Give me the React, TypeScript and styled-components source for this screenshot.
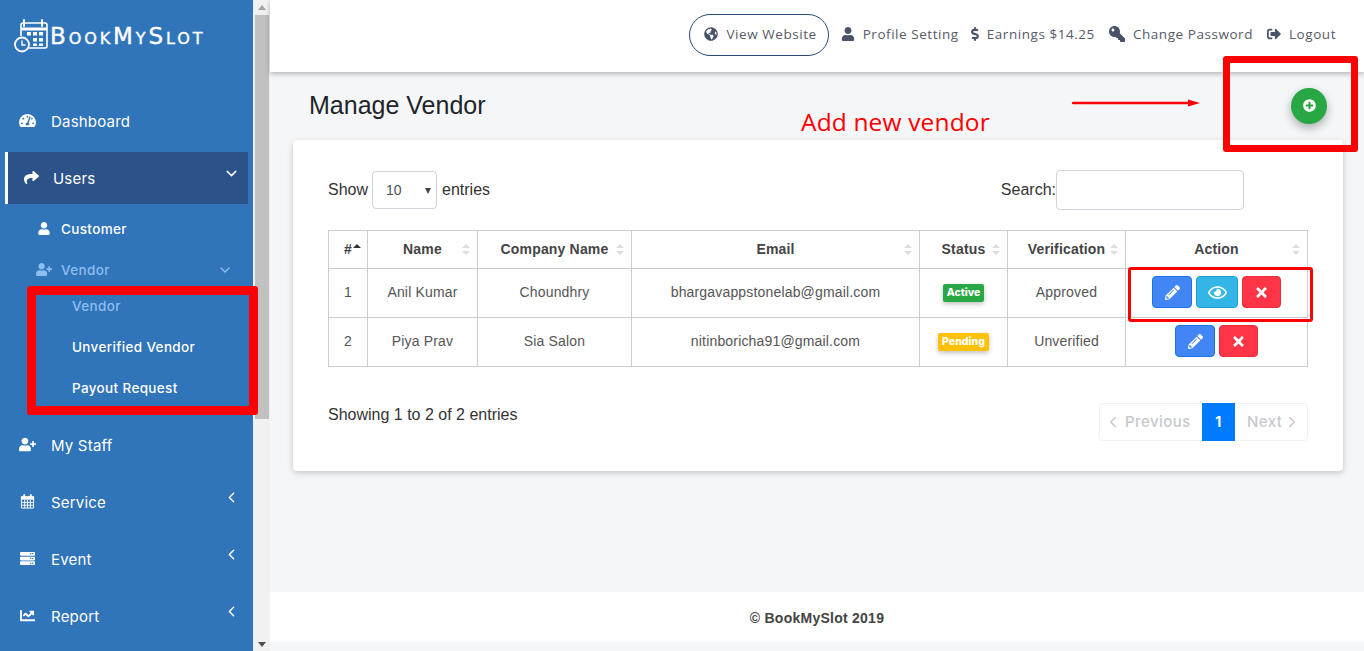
import React from 'react';
import styled, { createGlobalStyle } from 'styled-components';
import {
	FaChartLine,
	FaDollarSign,
	FaGlobeAmericas,
	FaKey,
	FaPencilAlt,
	FaPlusCircle,
	FaRegEye,
	FaServer,
	FaShare,
	FaSignOutAlt,
	FaTachometerAlt,
	FaTimes,
	FaUser,
	FaUserPlus,
} from 'react-icons/fa';
import { FiChevronDown, FiChevronLeft, FiChevronRight } from 'react-icons/fi';

const GlobalStyle = createGlobalStyle`
	html, body {
		margin: 0;
		height: 100%;
		overflow: hidden;
	}
	* {
		box-sizing: border-box;
	}
`;

const Page = styled.div`
	position: relative;
	display: flex;
	width: 100%;
	height: 651px;
	overflow: hidden;
	background: #f5f6f8;
	font-family: 'Liberation Sans', Arial, sans-serif;
`;

const Sidebar = styled.aside`
	width: 253px;
	flex-shrink: 0;
	background: #3074b9;
	color: #fff;
	font-family: Inter, 'Open Sans', sans-serif;
	overflow: hidden;
`;

const Logo = styled.div`
	display: flex;
	align-items: center;
	height: 92px;
	padding: 0 0 20px 13px;
	gap: 1px;
`;

const LogoText = styled.span`
	font-family: 'DejaVu Sans', sans-serif;
	font-variant: small-caps;
	font-size: 23px;
	line-height: 1;
	letter-spacing: 2.9px;
	-webkit-text-stroke: 0.4px #fff;
	white-space: nowrap;
`;

const NavRow = styled.div`
	display: flex;
	align-items: center;
	height: 57px;
	padding: 0 13px 0 19px;
	font-size: 15px;
	font-weight: 400;
	letter-spacing: 0.2px;

	svg.lead {
		width: 17px;
		height: 15px;
		margin-right: 15px;
	}
`;

const NavLabel = styled.span`
	flex: 1;
`;

const MainLabel = styled(NavLabel)`
	margin-top: 2px;
`;

const Caret = styled.span`
	display: flex;
	margin-top: -8px;
	font-size: 17px;
`;

const ActiveRow = styled.div`
	display: flex;
	align-items: center;
	height: 52px;
	margin: 2.5px 5px 4.5px 5px;
	padding: 0 8px 0 15px;
	background: #2b5389;
	border-left: 3px solid #fff;
	font-size: 15px;
	font-weight: 400;
	letter-spacing: 0.2px;

	svg.lead {
		width: 17px;
		height: 15px;
		margin-right: 13px;
	}
`;

const SubRow = styled.div<{ $muted?: boolean }>`
	display: flex;
	align-items: center;
	height: 41px;
	padding: 0 20px 0 36px;
	font-size: 13.5px;
	font-weight: 500;
	letter-spacing: 0.35px;
	color: ${(p) => (p.$muted ? '#8fbdf0' : '#fff')};

	svg.lead {
		width: 16px;
		height: 13px;
		margin-right: 9px;
	}
`;

const SubSubRow = styled.div<{ $muted?: boolean }>`
	display: flex;
	align-items: center;
	height: 41px;
	padding-left: 72px;
	font-size: 13.5px;
	font-weight: 500;
	letter-spacing: 0.35px;
	color: ${(p) => (p.$muted ? '#8fbdf0' : '#fff')};
`;

const SubSubGroup = styled.div`
	margin-top: -5px;
	margin-bottom: 8px;
`;

const ScrollTrack = styled.div`
	display: flex;
	flex-direction: column;
	align-items: center;
	width: 17px;
	flex-shrink: 0;
	background: #f1f1f1;
`;

const ScrollArrow = styled.div<{ $down?: boolean }>`
	width: 0;
	height: 0;
	margin: ${(p) => (p.$down ? 'auto 0 4px' : '5px 0 4px')};
	border-left: 4px solid transparent;
	border-right: 4px solid transparent;
	border-bottom: ${(p) => (p.$down ? '0' : '5px solid #a3a3a3')};
	border-top: ${(p) => (p.$down ? '5px solid #505050' : '0')};
`;

const ScrollThumb = styled.div`
	width: 14px;
	height: 404px;
	margin-top: 1px;
	background: #c1c1c1;
`;

const Main = styled.main`
	flex: 1;
	display: flex;
	flex-direction: column;
	min-width: 0;
`;

const TopBar = styled.header`
	display: flex;
	align-items: center;
	justify-content: flex-end;
	height: 72px;
	flex-shrink: 0;
	padding: 0 28px 2px 0;
	background: #fff;
	box-shadow: 0 2px 5px rgba(0, 0, 0, 0.26);
	font-family: 'Open Sans', sans-serif;
	font-size: 13.5px;
	letter-spacing: 0.55px;
	color: #555b68;
	position: relative;
`;

const TopLink = styled.a<{ $gap?: number; $left?: number }>`
	display: flex;
	align-items: center;
	gap: ${(p) => p.$gap ?? 8}px;
	margin-left: ${(p) => p.$left ?? 14}px;
	padding-bottom: 2px;
	white-space: nowrap;

	svg {
		color: #49526a;
		font-size: 14px;
	}
`;

const ViewSite = styled(TopLink)`
	height: 42px;
	margin: 0 -2px 0 0;
	padding: 0 11px 2px 14px;
	border: 1px solid #2b4a78;
	border-radius: 21px;
`;

const KeyIcon = styled(FaKey)`
	transform: scaleX(-1);
	&& {
		font-size: 16px;
	}
`;

const Content = styled.div`
	flex: 1;
	padding: 0 21px 0 23px;
`;

const TitleRow = styled.div`
	display: flex;
	align-items: center;
	justify-content: space-between;
	height: 68px;
	padding: 0 16px 0 16px;
`;

const Title = styled.h1`
	margin: 0 0 2px;
	font-size: 25px;
	font-weight: 400;
	color: #212529;
`;

const Fab = styled.button`
	display: flex;
	align-items: center;
	justify-content: center;
	width: 36px;
	height: 36px;
	margin-top: -1px;
	border: 0;
	border-radius: 50%;
	background: #28a745;
	color: #fff;
	font-size: 13px;
	box-shadow: 0 4px 10px rgba(0, 0, 0, 0.3);
`;

const Card = styled.section`
	height: 331px;
	padding: 30px 35px 0;
	background: #fff;
	border-radius: 4px;
	box-shadow: 0 2px 6px rgba(0, 0, 0, 0.2);
`;

const Controls = styled.div`
	display: flex;
	align-items: center;
	justify-content: space-between;
	height: 40px;
	padding-right: 64px;
	font-size: 16px;
	color: #333;
`;

const Group = styled.label`
	display: flex;
	align-items: center;
	margin-top: -1px;
`;

const SelectBox = styled.div`
	position: relative;
	display: flex;
	align-items: center;
	width: 65px;
	height: 38px;
	margin: 0 5px 0 4px;
	padding-left: 13px;
	border: 1px solid #ced4da;
	border-radius: 4px;
	font-size: 14px;
	color: #495057;

	&::after {
		content: '';
		position: absolute;
		right: 5px;
		top: 16px;
		border-left: 3.5px solid transparent;
		border-right: 3.5px solid transparent;
		border-top: 6px solid #444;
	}
`;

const SearchInput = styled.input`
	width: 188px;
	height: 40px;
	margin-top: 1px;
	padding: 0 10px;
	border: 1px solid #ced4da;
	border-radius: 4px;
	background: #fff;
	outline: none;
`;

const Table = styled.table`
	width: 979px;
	margin-top: 20px;
	border-collapse: collapse;
	table-layout: fixed;
	font-size: 14px;
	letter-spacing: 0.17px;
	color: #555;
`;

const Th = styled.th`
	position: relative;
	height: 38px;
	padding: 0 8px 2px;
	border: 1px solid #ccc;
	font-weight: 700;
	color: #444;
	text-align: center;
	white-space: nowrap;
`;

const Td = styled.td`
	height: 49px;
	padding: 0 4px 2px;
	border: 1px solid #ccc;
	text-align: center;
	white-space: nowrap;
`;

const Sort = styled.span<{ $asc?: boolean }>`
	position: absolute;
	right: ${(p) => (p.$asc ? '6px' : '7px')};
	top: 13px;
	width: 8px;
	height: 11px;

	&::before,
	&::after {
		content: '';
		position: absolute;
		left: 0;
		border-left: 4px solid transparent;
		border-right: 4px solid transparent;
	}
	&::before {
		top: 0;
		border-bottom: 4px solid ${(p) => (p.$asc ? '#333' : '#ddd')};
	}
	&::after {
		bottom: 0;
		border-top: 4px solid ${(p) => (p.$asc ? 'transparent' : '#ddd')};
	}
`;

const Badge = styled.span<{ $tone: string }>`
	display: inline-block;
	margin-top: 2px;
	padding: 2px 4px;
	border-radius: 2px;
	background: ${(p) => p.$tone};
	color: #fff;
	font-family: Inter, sans-serif;
	font-size: 10.5px;
	font-weight: 800;
	letter-spacing: 0;
	line-height: 14px;
	box-shadow: 0 2px 5px rgba(0, 0, 0, 0.25);
`;

const Actions = styled.div`
	display: flex;
	justify-content: center;
	gap: 4px;
`;

const ActionButton = styled.button<{ $tone: string; $edge: string; $w: number; $icon?: number }>`
	display: flex;
	align-items: center;
	justify-content: center;
	width: ${(p) => p.$w}px;
	height: 32px;
	padding: 0;
	border: 1px solid ${(p) => p.$edge};
	border-radius: 4px;
	background: ${(p) => p.$tone};
	color: #fff;
	font-size: ${(p) => p.$icon ?? 15}px;
`;

const TableFoot = styled.div`
	display: flex;
	justify-content: space-between;
	margin-top: 36px;
	font-size: 16px;
	color: #333;
	line-height: 22px;

	> span {
		margin-top: 1px;
	}
`;

const Pager = styled.div`
	display: flex;
	height: 38px;
	border: 1px solid #f0f1f2;
	border-radius: 4px;
	font-family: Inter, sans-serif;
	font-size: 15px;
	font-weight: 500;
	letter-spacing: 0.45px;
	color: #c6c9cd;

	svg {
		font-size: 18px;
	}
`;

const PagerStep = styled.span<{ $w: number; $pad: number; $gap: number }>`
	display: flex;
	align-items: center;
	gap: ${(p) => p.$gap}px;
	width: ${(p) => p.$w}px;
	padding-left: ${(p) => p.$pad}px;
`;

const PagerCurrent = styled.span`
	display: flex;
	align-items: center;
	justify-content: center;
	width: 33px;
	margin: -1px 0;
	background: #007bff;
	color: #fff;
	font-size: 14px;
	font-weight: 700;
`;

const Footer = styled.footer`
	display: flex;
	align-items: center;
	justify-content: center;
	height: 50px;
	flex-shrink: 0;
	margin-bottom: 9px;
	padding-top: 2px;
	background: #fff;
	font-size: 14px;
	font-weight: 700;
	letter-spacing: 0.25px;
	color: #444;
`;

const RedBox = styled.div<{ $x: number; $y: number; $w: number; $h: number; $b: number }>`
	position: absolute;
	left: ${(p) => p.$x}px;
	top: ${(p) => p.$y}px;
	width: ${(p) => p.$w}px;
	height: ${(p) => p.$h}px;
	border: ${(p) => p.$b}px solid #fe0000;
	border-radius: 3px;
	pointer-events: none;
`;

const Note = styled.div`
	position: absolute;
	left: 801px;
	top: 105px;
	font-family: 'Open Sans', sans-serif;
	font-size: 24.5px;
	letter-spacing: 0.15px;
	line-height: 34px;
	color: #fe0000;
	white-space: nowrap;
`;

const Arrow = styled.svg`
	position: absolute;
	left: 1072px;
	top: 98px;
`;

const LogoMark = () => (
	<svg width="36" height="36" viewBox="0 0 36 36" fill="none" stroke="#fff" strokeWidth="1.6">
		<path d="M8 18V7a2 2 0 0 1 2-2h22a2 2 0 0 1 2 2v21a2 2 0 0 1-2 2H16" />
		<path d="M8 11h26" strokeWidth="3" />
		<path d="M11 2v6M29 2v6" strokeWidth="2" strokeLinecap="round" />
		<g fill="#fff" stroke="none">
			<rect x="14" y="14" width="4" height="3.5" />
			<rect x="20" y="14" width="4" height="3.5" />
			<rect x="26" y="14" width="4" height="3.5" />
			<rect x="20" y="20" width="4" height="3.5" />
			<rect x="26" y="20" width="4" height="3.5" />
			<rect x="20" y="25.5" width="4" height="2.5" />
			<rect x="26" y="25.5" width="4" height="2.5" />
		</g>
		<circle cx="9" cy="26.5" r="7" strokeWidth="1.8" fill="#3074b9" />
		<path d="M9 22.5v4.5h3.5" strokeWidth="1.4" />
	</svg>
);

const CalendarGrid = () => (
	<svg className="lead" viewBox="0 0 16 16" fill="none" stroke="#fff">
		<path d="M1.5 3h13v12h-13z" strokeWidth="1" />
		<path d="M1 2.5h14V6H1z" fill="#fff" strokeWidth="0" />
		<path d="M4.5 1v3M11.5 1v3" strokeWidth="2" strokeLinecap="round" />
		<path d="M5 6v9M8 6v9M11 6v9M1.5 9h13M1.5 12h13" strokeWidth="1" />
	</svg>
);

const columns = [
	{ name: '#', width: 39 },
	{ name: 'Name', width: 110 },
	{ name: 'Company Name', width: 154 },
	{ name: 'Email', width: 288 },
	{ name: 'Status', width: 88 },
	{ name: 'Verification', width: 118 },
	{ name: 'Action', width: 182 },
];

const vendors = [
	{ id: 1, name: 'Anil Kumar', company: 'Choundhry', email: 'bhargavappstonelab@gmail.com', status: 'Active', tone: '#28a745', verification: 'Approved', view: true },
	{ id: 2, name: 'Piya Prav', company: 'Sia Salon', email: 'nitinboricha91@gmail.com', status: 'Pending', tone: '#ffc107', verification: 'Unverified', view: false },
];

const App = () => {
	return (
		<Page>
			<GlobalStyle />
			<Sidebar>
				<Logo>
					<LogoMark />
					<LogoText>BookMySlot</LogoText>
				</Logo>
				<NavRow>
					<FaTachometerAlt className="lead" />
					<MainLabel>Dashboard</MainLabel>
				</NavRow>
				<ActiveRow>
					<FaShare className="lead" />
					<MainLabel>Users</MainLabel>
					<Caret>
						<FiChevronDown />
					</Caret>
				</ActiveRow>
				<SubRow>
					<FaUser className="lead" />
					<NavLabel>Customer</NavLabel>
				</SubRow>
				<SubRow $muted>
					<FaUserPlus className="lead" />
					<NavLabel>Vendor</NavLabel>
					<FiChevronDown size={16} />
				</SubRow>
				<SubSubGroup>
					<SubSubRow $muted>Vendor</SubSubRow>
					<SubSubRow>Unverified Vendor</SubSubRow>
					<SubSubRow>Payout Request</SubSubRow>
				</SubSubGroup>
				<NavRow>
					<FaUserPlus className="lead" />
					<MainLabel>My Staff</MainLabel>
				</NavRow>
				<NavRow>
					<CalendarGrid />
					<MainLabel>Service</MainLabel>
					<Caret>
						<FiChevronLeft />
					</Caret>
				</NavRow>
				<NavRow>
					<FaServer className="lead" />
					<MainLabel>Event</MainLabel>
					<Caret>
						<FiChevronLeft />
					</Caret>
				</NavRow>
				<NavRow>
					<FaChartLine className="lead" />
					<MainLabel>Report</MainLabel>
					<Caret>
						<FiChevronLeft />
					</Caret>
				</NavRow>
			</Sidebar>

			<ScrollTrack>
				<ScrollArrow />
				<ScrollThumb />
				<ScrollArrow $down />
			</ScrollTrack>

			<Main>
				<TopBar>
					<ViewSite>
						<FaGlobeAmericas />
						View Website
					</ViewSite>
					<TopLink>
						<FaUser />
						Profile Setting
					</TopLink>
					<TopLink $gap={5} $left={9}>
						<FaDollarSign />
						Earnings $14.25
					</TopLink>
					<TopLink>
						<KeyIcon />
						Change Password
					</TopLink>
					<TopLink>
						<FaSignOutAlt />
						Logout
					</TopLink>
				</TopBar>

				<Content>
					<TitleRow>
						<Title>Manage Vendor</Title>
						<Fab>
							<FaPlusCircle />
						</Fab>
					</TitleRow>

					<Card>
						<Controls>
							<Group>
								Show
								<SelectBox>10</SelectBox>
								entries
							</Group>
							<Group>
								Search:
								<SearchInput />
							</Group>
						</Controls>

						<Table>
							<colgroup>
								{columns.map((c) => (
									<col key={c.name} width={c.width} />
								))}
							</colgroup>
							<thead>
								<tr>
									{columns.map((c, i) => (
										<Th key={c.name}>
											{c.name}
											<Sort $asc={i === 0} />
										</Th>
									))}
								</tr>
							</thead>
							<tbody>
								{vendors.map((v) => (
									<tr key={v.id}>
										<Td>{v.id}</Td>
										<Td>{v.name}</Td>
										<Td>{v.company}</Td>
										<Td>{v.email}</Td>
										<Td>
											<Badge $tone={v.tone}>{v.status}</Badge>
										</Td>
										<Td>{v.verification}</Td>
										<Td>
											<Actions>
												<ActionButton $tone="#4285f4" $edge="#1a73e8" $w={40}>
													<FaPencilAlt />
												</ActionButton>
												{v.view && (
													<ActionButton $tone="#33b5e5" $edge="#1c9fce" $w={42} $icon={19}>
														<FaRegEye />
													</ActionButton>
												)}
												<ActionButton $tone="#ff3547" $edge="#f0293b" $w={39}>
													<FaTimes />
												</ActionButton>
											</Actions>
										</Td>
									</tr>
								))}
							</tbody>
						</Table>

						<TableFoot>
							<span>Showing 1 to 2 of 2 entries</span>
							<Pager>
								<PagerStep $w={102} $pad={4} $gap={3}>
									<FiChevronLeft />
									Previous
								</PagerStep>
								<PagerCurrent>1</PagerCurrent>
								<PagerStep $w={72} $pad={12} $gap={1}>
									Next
									<FiChevronRight />
								</PagerStep>
							</Pager>
						</TableFoot>
					</Card>
				</Content>

				<Footer>© BookMySlot 2019</Footer>
			</Main>

			<RedBox $x={27} $y={286} $w={231} $h={129} $b={9} />
			<RedBox $x={1223} $y={56} $w={135} $h={96} $b={7} />
			<RedBox $x={1128} $y={267} $w={185} $h={55} $b={3} />
			<Note>Add new vendor</Note>
			<Arrow width="130" height="12" viewBox="0 0 130 12">
				<path d="M1 5h116" stroke="#fe0000" strokeWidth="2.5" strokeLinecap="round" />
				<path d="M116 1.5L128 5L116 8.5z" fill="#fe0000" />
			</Arrow>
		</Page>
	);
};

export default App;
